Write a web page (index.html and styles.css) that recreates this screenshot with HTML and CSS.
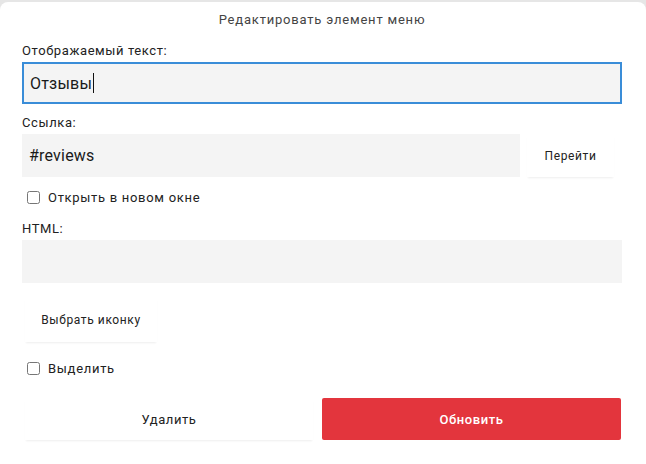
FILE: index.html
```html
<!DOCTYPE html>
<html lang="ru">
<head>
<meta charset="utf-8">
<title>Редактировать элемент меню</title>
<link rel="stylesheet" href="styles.css">
</head>
<body>
<div class="modal">
  <div class="title">Редактировать элемент меню</div>

  <div class="label first">Отображаемый текст:</div>
  <div class="field focused"><span class="val">Отзывы</span><span class="caret"></span></div>

  <div class="label">Ссылка:</div>
  <div class="link-row">
    <div class="field plain"><span class="val">#reviews</span></div>
    <div class="btn go">Перейти</div>
  </div>

  <label class="check-row first-check"><input type="checkbox"><span>Открыть в новом окне</span></label>

  <div class="label html-label">HTML:</div>
  <div class="field plain"></div>

  <div class="btn icon-btn">Выбрать иконку</div>

  <label class="check-row second-check"><input type="checkbox"><span>Выделить</span></label>

  <div class="actions">
    <div class="btn del">Удалить</div>
    <div class="btn update">Обновить</div>
  </div>
</div>
</body>
</html>
```

FILE: styles.css
```css
html, body {
  margin: 0;
  padding: 0;
}
body {
  background: #e6e6e6;
  font-family: Roboto, "Liberation Sans", Arial, sans-serif;
  color: #222;
  width: 646px;
  height: 464px;
  overflow: hidden;
}
.modal {
  margin-top: 2px;
  height: 462px;
  box-sizing: border-box;
  background: #fff;
  border-radius: 8px 8px 0 0;
  padding: 10px 24px 0 22px;
}
.title {
  text-align: center;
  font-size: 13px;
  line-height: 16px;
  color: #444;
  letter-spacing: 0.8px;
}
.label {
  font-size: 13px;
  line-height: 16px;
  letter-spacing: 0.6px;
  color: #222;
  margin-top: 11px;
  margin-bottom: 3px;
}
.label.first {
  margin-top: 15px;
  margin-bottom: 3px;
}
.field {
  box-sizing: border-box;
  height: 43px;
  background: #f4f4f4;
  display: flex;
  align-items: center;
  padding: 0 7px;
  font-size: 16px;
  letter-spacing: 0.2px;
  color: #1a1a1a;
}
.field.focused {
  height: 42px;
  border: 2px solid #3a8dd8;
  padding: 0 6px;
}
.caret {
  display: inline-block;
  width: 1px;
  height: 20px;
  background: #111;
  margin-left: 1px;
}
.link-row {
  display: flex;
  gap: 7px;
  padding-right: 8px;
}
.link-row .field {
  flex: 1;
}
.btn {
  display: flex;
  align-items: center;
  justify-content: center;
  background: #fff;
  font-size: 12px;
  letter-spacing: 0.6px;
  color: #222;
  box-shadow: 0 2px 2px -1px rgba(0, 0, 0, 0.07);
  box-sizing: border-box;
}
.go {
  width: 87px;
  height: 43px;
}
.check-row {
  display: flex;
  align-items: center;
  height: 19px;
  font-size: 13px;
  letter-spacing: 0.7px;
  color: #222;
}
.check-row input {
  width: 13px;
  height: 13px;
  margin: 0 0 0 5px;
}
.check-row span {
  margin-left: 8px;
}
.first-check {
  margin-top: 11px;
}
.html-label {
  margin-top: 14px;
}
.icon-btn {
  width: 132px;
  height: 45px;
  margin: 14px 0 0 3px;
}
.second-check {
  margin-top: 17px;
}
.actions {
  display: grid;
  grid-template-columns: 288px 1fr;
  gap: 9px;
  margin-top: 20px;
  padding-left: 3px;
  padding-right: 1px;
}
.del {
  height: 42px;
  font-size: 13px;
}
.update {
  height: 42px;
  background: #e3353d;
  color: #fff;
  font-size: 13px;
  font-weight: 500;
  border-radius: 2px;
  box-shadow: none;
}
```
